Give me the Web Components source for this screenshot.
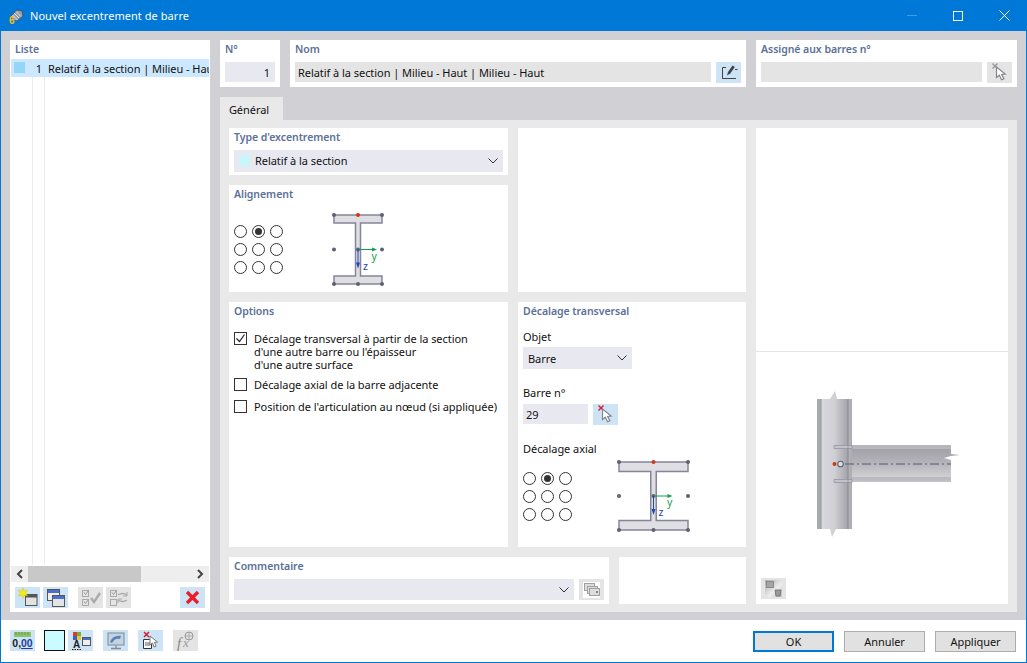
<!DOCTYPE html>
<html lang="fr"><head><meta charset="utf-8"><title>Nouvel excentrement de barre</title>
<style>
html,body{margin:0;padding:0;height:100%;overflow:hidden}
body{font:11px "Noto Sans","Open Sans",sans-serif;color:#111;letter-spacing:-.05px}
</style></head><body>
<x-window title-text="Nouvel excentrement de barre">
  <x-list slot="list"></x-list>
  <x-card slot="no" label="N°"><x-input w="50" align="right" value="1"></x-input></x-card>
  <x-card slot="nom" label="Nom"><x-row gap="5"><x-input grow value="Relatif à la section | Milieu - Haut | Milieu - Haut" tone="gray"></x-input><x-btn icon="edit"></x-btn></x-row></x-card>
  <x-card slot="assign" label="Assigné aux barres n°"><x-row gap="5"><x-input grow tone="gray"></x-input><x-btn icon="cursorx" off></x-btn></x-row></x-card>

  <x-card slot="type" label="Type d'excentrement"><x-select swatch="#c9f6fb" value="Relatif à la section" w="269" nudge></x-select></x-card>
  <x-card slot="align" label="Alignement"><x-align></x-align></x-card>
  <x-card slot="blank1"></x-card>
  <x-card slot="options" label="Options"><x-options></x-options></x-card>
  <x-card slot="offset" label="Décalage transversal"><x-offset></x-offset></x-card>
  <x-card slot="comment" label="Commentaire"><x-row gap="5"><x-select w="340" h="21"></x-select><x-btn icon="stack" off></x-btn></x-row></x-card>
  <x-card slot="blank2"></x-card>
  <x-preview slot="preview"></x-preview>

  <x-footer slot="footer"></x-footer>
</x-window>
<script>
const ICONS={
 edit:`<path d="M10 5.500H6.500v11H10M6.500 16.500H20" fill="none" stroke="#444" stroke-width="1"/><path d="M11 13.500l1-3.500 4.500-6.500 2.300 1.500-4.500 6.500z" fill="#444"/><path d="M19 7.500h2.500" stroke="#444"/>`,
 cursorx:`<path d="M5.500 1.500l5 5M10.500 1.500l-5 5" stroke="C1" stroke-width="1.400"/><path d="M9.500 5l0 10.500 2.800-2.300 2.300 4.600 2.300-1-2.300-4.400 3.600-.4z" fill="#fff" stroke="#85858d" stroke-width="1.200"/>`,
 neww:`<rect x="10.500" y="7.500" width="11.500" height="11" fill="#e2e2e2" stroke="#555"/><rect x="10.500" y="7.500" width="11.500" height="3" fill="#555"/><path d="M8 1l1.300 3.200 3.400-.8-2 2.800 2 2.800-3.400-.8L8 11.400 6.700 8.200l-3.400.8 2-2.800-2-2.800 3.400.8z" fill="#f7ec15" stroke="#c9b900" stroke-width=".4"/>`,
 copy:`<rect x="4.500" y="2.500" width="12" height="11" fill="#eee" stroke="#555"/><rect x="5" y="3" width="11" height="3" fill="#4a6fd0"/><rect x="9.500" y="8.500" width="12" height="11" fill="#e4e4e4" stroke="#555"/><rect x="10" y="9" width="11" height="3" fill="#4a6fd0"/>`,
 checks:`<g fill="none" stroke="#aaa"><rect x="4.500" y="3.500" width="6" height="6"/><rect x="4.500" y="12.500" width="6" height="6"/></g><path d="M6 5.500l1.500 2 3-4M6 14.500l1.500 2 3-4" fill="none" stroke="#999"/><path d="M13 11l3 4 6-9" fill="none" stroke="#aaa" stroke-width="2.400"/>`,
 swap:`<g fill="none" stroke="#aaa"><rect x="4.500" y="3.500" width="6" height="6"/><rect x="4.500" y="12.500" width="6" height="6"/></g><path d="M6 5.500l1.500 2 3-4" fill="none" stroke="#999"/><path d="M12 8c3-2 6-2 9 0M21 13c-3 2-6 2-9 0" fill="none" stroke="#aaa" stroke-width="1.400"/><path d="M21 5v4h-4M12 16v-4h4" fill="none" stroke="#aaa"/>`,
 del:`<path d="M7 5l11 11M18 5L7 16" stroke="#ee1c25" stroke-width="3.300"/>`,
 units:`<rect x="4" y="2" width="17" height="5" fill="#8fc36a"/><path d="M6 2v3M9 2v3M12 2v3M15 2v3M18 2v3" stroke="#4e8a34" stroke-width=".7"/><text x="12.500" y="17" text-anchor="middle" font-family="Liberation Sans" font-size="10.500" font-weight="700" fill="#222">0,<tspan fill="#223f96" text-decoration="underline">00</tspan></text>`,
 tree:`<rect x="5" y="2" width="4" height="4" fill="#e03a2c"/><rect x="9" y="2" width="4" height="4" fill="#69b33b"/><rect x="5" y="6" width="4" height="4" fill="#3c5fd0"/><rect x="9" y="6" width="4" height="4" fill="#efc82b"/><text x="8.500" y="18" text-anchor="middle" font-family="Liberation Sans" font-size="10" font-weight="700" fill="#222">A</text><path d="M4 19.500h10" stroke="#222" stroke-dasharray="1.500 1"/><rect x="14.500" y="7.500" width="8" height="8" fill="#eee" stroke="#555"/><rect x="15" y="8" width="7" height="2" fill="#4a6ecb"/>`,
 monitor:`<rect x="5" y="3" width="16" height="12" fill="#c4d3e2" stroke="#8a96a2" stroke-width="1.200"/><path d="M7 12c2-5 6-7 11-6l-1 3c-3-1-6 0-8 4z" fill="#5b82b4"/><path d="M13 15.500v2.500M8 18.500h10" stroke="#7e8a96" stroke-width="1.300"/>`,
 docx:`<path d="M6 2l5 5M11 2L6 7" stroke="#e0172b" stroke-width="1.500"/><path d="M5.500 9.500h6l2 2v7h-8z" fill="#fff" stroke="#333"/><path d="M7 13h5M7 15h5" stroke="#333" stroke-width=".8"/><path d="M12 6l0 9 2.500-2 1.500 4 2-.8-1.500-3.800 3-.4z" fill="#fff" stroke="#777"/>`,
 fx:`<text x="4" y="18" font-family="Liberation Serif" font-style="italic" font-size="15" fill="#888">f</text><text x="10" y="17" font-family="Liberation Serif" font-style="italic" font-size="13" fill="#999">x</text><circle cx="16" cy="6" r="4" fill="none" stroke="#999"/><path d="M12 6h8M16 2v8" stroke="#999" stroke-width=".7"/>`,
 stack:`<rect x="4" y="3" width="17" height="16" fill="#fff"/><g fill="#ddd" stroke="#a0a0a0"><rect x="5.500" y="4.500" width="10" height="7"/><rect x="8.500" y="7.500" width="10" height="7"/><rect x="10.500" y="9.500" width="10" height="7"/></g><rect x="17" y="12" width="2" height="2" fill="#888"/>`,
 view:`<defs><linearGradient id="vg" x1="0" y1="0" x2="1" y2="1"><stop offset="0" stop-color="#aaa"/><stop offset=".6" stop-color="#eee"/><stop offset="1" stop-color="#bbb"/></linearGradient></defs><rect x="4" y="2" width="17" height="17" fill="url(#vg)"/><rect x="5.500" y="3.500" width="7" height="6" fill="#a5a5a5" stroke="#8a8a8a"/><path d="M14 12h6l-1 6h-4z" fill="#999" stroke="#777"/>`
};
function def(name,css,render){
  customElements.define(name,class extends HTMLElement{
    connectedCallback(){
      if(this.shadowRoot)return;
      const r=this.attachShadow({mode:'open'});
      r.innerHTML=`<style>${css}</style>`+render(this);
    }
  });
}
const a=(e,n,d='')=>e.hasAttribute(n)?e.getAttribute(n):d;

def('x-row',':host{display:flex;align-items:flex-start}',e=>{e.style.gap=a(e,'gap','0')+'px';return '<slot></slot>'});

def('x-btn',`:host{display:block;flex:none;width:25px;height:21px;background:#cde4f7}
 :host([off]){background:#e4e4e4}svg{display:block}`,
 e=>`<svg width="25" height="21" viewBox="0 0 25 21">${(ICONS[a(e,'icon')]||'').replace(/C1/g,e.hasAttribute('off')?'#999':'#e0172b')}</svg>`);

def('x-input',`:host{display:block;height:20px;flex:none;box-sizing:border-box;padding:1px 5px 0 3px;line-height:20px;background:#e8e8f0;white-space:nowrap;overflow:hidden}
 :host([tone=gray]){background:#e4e4e4}:host([grow]){flex:1;min-width:0}:host([align=right]){text-align:right}`,
 e=>{if(a(e,'w'))e.style.width=a(e,'w')+'px';return a(e,'value')});

def('x-select',`:host{display:flex;align-items:center;flex:none;box-sizing:border-box;height:22px;background:#e8e8f0;padding:0 5px;white-space:nowrap}
 :host([nudge]){padding-bottom:1px}
 i{width:11px;height:11px;margin-right:5px;display:block}
 span{flex:1}svg{display:block;flex:none}`,
 e=>{e.style.width=a(e,'w')+'px';if(a(e,'h'))e.style.height=a(e,'h')+'px';
  return (a(e,'swatch')?`<i style="background:${a(e,'swatch')}"></i>`:'')+`<span>${a(e,'value')}</span><svg width="10" height="6" viewBox="0 0 10 6"><path d="M.5.5L5 5 9.500.5" fill="none" stroke="#333"/></svg>`});

def('x-card',`:host{display:block;background:#fff;padding:0 5px;min-width:0;overflow:hidden;box-sizing:border-box}
 h4{margin:0;height:18px;line-height:18px;font-size:10.500px;font-weight:600;color:#5c7098;white-space:nowrap}
 .c{margin-top:4px}`,
 e=>a(e,'label')?`<h4>${a(e,'label')}</h4><div class="c"><slot></slot></div>`:'');

def('x-radios',`:host{display:grid;grid-template-columns:repeat(3,13px);grid-auto-rows:13px;gap:5px;flex:none}
 i{display:block;box-sizing:border-box;width:13px;height:13px;border:1px solid #333;border-radius:50%;position:relative}
 i.on::after{content:"";position:absolute;inset:2px;border-radius:50%;background:#333}`,
 ()=>[0,1,2,3,4,5,6,7,8].map(i=>`<i class="${i==1?'on':''}"></i>`).join(''));

def('x-ibeam',':host{display:block;flex:none}svg{display:block;overflow:visible}',e=>{
 const w=+a(e,'w'),h=+a(e,'h'),f=+a(e,'f'),t=+a(e,'t'),cx=w/2,cy=h/2,c='#5f5f75';
 const d=(x,y,col=c)=>`<circle cx="${x}" cy="${y}" r="2" fill="${col}"/>`;
 const s=t/2;
 return `<svg width="${w}" height="${h}" viewBox="0 0 ${w} ${h}">
 <path d="M0 0H${w}V${f}H${cx+s}V${h-f}H${w}V${h}H0V${h-f}H${cx-s}V${f}H0Z" fill="#dedee3" stroke="#85859a" stroke-width="1.500"/>
 ${d(0,0)}${d(w,0)}${d(0,h)}${d(cx,h)}${d(w,h)}${d(0,cy)}${d(w,cy)}${d(cx,cy)}${d(cx,0,'#d0390f')}
 <path d="M${cx} ${cy}H${cx+15}" stroke="#12a04e" stroke-width="1"/><path d="M${cx+19} ${cy}l-5-2v4z" fill="#12a04e"/>
 <path d="M${cx} ${cy}V${cy+15}" stroke="#1b45b8" stroke-width="1"/><path d="M${cx} ${cy+19}l-2-6h4z" fill="#1b45b8"/>
 <text x="${cx+13.5}" y="${cy+10}" font-family="Noto Sans" font-size="10.500" fill="#12a04e">y</text>
 <text x="${cx+5}" y="${cy+20}" font-family="Noto Sans" font-size="10.500" fill="#1b45b8">z</text></svg>`});

def('x-align',':host{display:flex;align-items:flex-start;padding-top:18px}x-ibeam{margin:-10px 0 0 51px}',
 ()=>`<x-radios></x-radios><x-ibeam w="48" h="69" f="8" t="5"></x-ibeam>`);

def('x-check',`:host{display:flex;align-items:flex-start;line-height:13px}
 i{flex:none;display:block;box-sizing:border-box;width:13px;height:13px;border:1px solid #333;margin:0 7px 0 0;background:#fff}
 svg{display:block}`,
 e=>`<i>${e.hasAttribute('on')?'<svg width="11" height="11" viewBox="0 0 11 11"><path d="M1.500 5.500l3 3 5-7" fill="none" stroke="#222" stroke-width="1.200"/></svg>':''}</i><span><slot></slot></span>`);

def('x-options',':host{display:flex;flex-direction:column;padding-top:8px}',
 ()=>`<x-check on>Décalage transversal à partir de la section<br>d'une autre barre ou l'épaisseur<br>d'une autre surface</x-check>
 <x-check style="margin-top:7px">Décalage axial de la barre adjacente</x-check>
 <x-check style="margin-top:9px">Position de l'articulation au nœud (si appliquée)</x-check>`);

def('x-offset',`:host{display:block}
 p{margin:0;height:18px;line-height:18px}
 .r{display:flex;gap:5px}
 .g{display:flex;align-items:flex-start;padding-top:14px}
 x-ibeam{margin:-10px 0 0 47px}`,
 ()=>`<p style="margin-top:8px">Objet</p><x-select w="109" value="Barre" style="margin-top:1px"></x-select>
 <p style="margin-top:15px">Barre n°</p><div class="r" style="margin-top:2px"><x-input w="65" value="29"></x-input><x-btn icon="cursorx"></x-btn></div>
 <p style="margin-top:15px">Décalage axial</p><div class="g"><x-radios></x-radios><x-ibeam w="69" h="68" f="9.500" t="5.500"></x-ibeam></div>`);

def('x-preview',`:host{display:flex;flex-direction:column;background:#fff;width:252px;flex:none}
 .t{height:223px;border-bottom:1px solid #e4e4e4}
 .b{flex:1;display:flex;flex-direction:column;padding:38px 5px 5px}
 svg{display:block;margin-left:39px;flex:none}
 x-btn{margin-top:auto}`,
 ()=>`<div class="t"></div><div class="b">
 <svg width="160" height="150" viewBox="0 0 160 150">
 <defs>
  <linearGradient id="col" x1="0" x2="1" y1="0" y2="0"><stop offset="0" stop-color="#a9a9b1"/><stop offset=".12" stop-color="#a9a9b1"/><stop offset=".13" stop-color="#d8d8de"/><stop offset=".5" stop-color="#cfcfd4"/><stop offset=".88" stop-color="#a3a3aa"/><stop offset=".89" stop-color="#b8b8bd"/><stop offset="1" stop-color="#a9a9ae"/></linearGradient>
  <linearGradient id="bm" x1="0" x2="0" y1="0" y2="1"><stop offset="0" stop-color="#b6b6bd"/><stop offset=".1" stop-color="#b6b6bd"/><stop offset=".11" stop-color="#a2a2a8"/><stop offset=".5" stop-color="#b4b4ba"/><stop offset=".87" stop-color="#d0d0d4"/><stop offset=".88" stop-color="#b5b5bb"/><stop offset="1" stop-color="#c4c4c9"/></linearGradient>
 </defs>
 <path d="M17 9h13l5-8 2 8h15v130H36l-4 8-2-8H17z" fill="url(#col)"/>
 <path d="M21 9v130M48 9v130" stroke="#8f8f97" stroke-width=".8"/>
 <path d="M52 55H151V64l9 1-9 1-7 2 7 2V92H52z" fill="url(#bm)"/>
 <path d="M34 55.500h18v3H34zM34 89.500h18v3H34z" fill="#c3c3c9" stroke="#8f8f97" stroke-width=".7"/>
 <path d="M48 9v130" stroke="#8f8f97" stroke-width=".8"/>
 <path d="M45 74H151" stroke="#77778a" stroke-width="1.300" stroke-dasharray="9 3 2 3"/>
 <circle cx="40.500" cy="74" r="2.800" fill="#ddd" stroke="#5f5f78" stroke-width="1.100"/>
 <circle cx="34.500" cy="74" r="2" fill="#d0390f"/>
 </svg>
 <x-btn icon="view" off></x-btn></div>`);

def('x-list',`:host{display:flex;flex-direction:column;background:#fff;width:200px;flex:none;box-sizing:border-box;padding:0 1px 4px}
 h4{margin:0;height:19px;line-height:18px;padding-left:4px;font-size:10.500px;font-weight:600;color:#5c7098}
 .rows{flex:1;min-height:0;position:relative;overflow:hidden;background:linear-gradient(#ececec,#ececec) 21px 0/1px 100% no-repeat,linear-gradient(#ececec,#ececec) 33px 0/1px 100% no-repeat}
 .row{display:flex;align-items:center;height:18px;background:#cce8ff;white-space:nowrap;overflow:hidden;padding-top:1px;box-sizing:border-box}
 .row i{width:11px;height:11px;background:#93d6f7;margin:0 0 3px 3px;flex:none}
 .row b{font-weight:400;width:17px;text-align:right;flex:none;margin-right:6px}
 .sb{display:flex;align-items:center;justify-content:space-between;height:16px;background:#eee;margin-top:1px;position:relative}
 .sb svg{display:block;flex:none;margin:0 5px}
 .th{position:absolute;left:17px;width:113px;top:0;bottom:0;background:#c8c8c8}
 .bar{display:flex;height:21px;margin-top:5px;padding-left:4px}`,
 ()=>`<h4>Liste</h4><div class="rows"><div class="row"><i></i><b>1</b><span>Relatif à la section | Milieu - Haut | Milieu - Haut</span></div></div>
 <div class="sb"><svg width="7" height="10" viewBox="0 0 7 10"><path d="M6 1L2 5l4 4" fill="none" stroke="#444" stroke-width="2"/></svg><div class="th"></div><svg width="7" height="10" viewBox="0 0 7 10"><path d="M1 1l4 4-4 4" fill="none" stroke="#444" stroke-width="2"/></svg></div>
 <div class="bar"><x-btn icon="neww"></x-btn><x-btn icon="copy" style="margin-left:3px"></x-btn><x-btn icon="checks" off style="margin-left:10px"></x-btn><x-btn icon="swap" off style="margin-left:3px"></x-btn><x-btn icon="del" style="margin-left:49px"></x-btn></div>`);

def('x-footer',`:host{display:flex;align-items:flex-start;height:42px;background:#fff;padding:10px 10px 0 9px;box-sizing:border-box;flex:none}
 .sw{width:21px;height:21px;box-sizing:border-box;border:1px solid #111;background:#c9fbff;margin:0 3px 0 9px}
 .sp{flex:1}
 button{all:unset;box-sizing:border-box;width:81px;height:21px;margin-top:1px;background:#e1e1e1;border:1px solid #adadad;text-align:center;line-height:19px;font:inherit}
 button.def{border:2px solid #0078d7;line-height:17px}
 button+button{margin-left:10px}`,
 ()=>`<x-btn icon="units"></x-btn><div class="sw"></div><x-btn icon="tree"></x-btn><x-btn icon="monitor" style="margin-left:10px"></x-btn><x-btn icon="docx" style="margin-left:10px"></x-btn><x-btn icon="fx" off style="margin-left:10px"></x-btn><div class="sp"></div>
 <button class="def">OK</button><button>Annuler</button><button>Appliquer</button>`);

def('x-window',`:host{display:flex;flex-direction:column;width:1027px;height:663px;box-sizing:border-box;border:1px solid #0078d7;border-top:0;background:#d0d0d5;overflow:hidden}
 .tb{height:31px;flex:none;background:#0078d7;color:#fff;display:flex;align-items:center;padding-left:8px;margin:0 -1px;font-size:11px;letter-spacing:.05px}
 .tb .ic{margin-right:6px;display:block}
 .tb .tt{flex:1}
 .tb .w{width:46px;display:flex;justify-content:center;align-items:center;height:31px}
 .main{flex:1;min-height:0;display:flex;gap:10px;padding:9px 9px 8px}
 .right{flex:1;min-width:0;display:flex;flex-direction:column}
 .top{display:grid;grid-template-columns:60px 456px 1fr;grid-template-rows:47px;gap:10px}
 .tab{align-self:flex-start;margin-top:10px;width:63px;height:23px;background:#e9e9e9;line-height:25px;padding-right:5px;box-sizing:border-box;text-align:center}
 .panel{flex:1;min-height:0;background:#e9e9e9;padding:8px 9px;display:flex;gap:10px}
 .left{width:517px;flex:none;display:flex;flex-direction:column;gap:10px}
 .g{display:grid;grid-template-columns:279px 228px;grid-template-rows:47px 107px 245px;gap:10px}
 .b1{grid-column:2;grid-row:1/span 2}
 .bot{display:grid;grid-template-columns:380px 127px;grid-template-rows:47px;gap:10px}`,
 e=>`<div class="tb">
 <svg class="ic" width="16" height="16" viewBox="0 0 16 16"><path d="M3 8l6-6 5 1 1 5-6 5-5-1z" fill="#9aa0a8" stroke="#444" stroke-width=".7"/><path d="M6 5l5 5M8 3.500l5 5M4.500 7l5 5" stroke="#e8e8e8" stroke-width=".8"/><text x="1" y="15.500" font-family="Liberation Sans" font-size="10" font-weight="700" fill="#f2c21a">6</text></svg>
 <span class="tt">${a(e,'title-text')}</span>
 <span class="w"><svg width="12" height="2"><path d="M1 .5h10" stroke="#3f9de2"/></svg></span>
 <span class="w"><svg width="10" height="10"><rect x=".5" y=".5" width="9" height="9" fill="none" stroke="#fff"/></svg></span>
 <span class="w"><svg width="11" height="11"><path d="M.5.5l10 10M10.500.5l-10 10" stroke="#fff"/></svg></span>
 </div>
 <div class="main"><slot name="list"></slot><div class="right">
  <div class="top"><slot name="no"></slot><slot name="nom"></slot><slot name="assign"></slot></div>
  <div class="tab">Général</div>
  <div class="panel"><div class="left"><div class="g">
    <slot name="type"></slot><div class="b1" style="display:grid"><slot name="blank1"></slot></div>
    <slot name="align" style="grid-column:1;grid-row:2"></slot>
    <slot name="options" style="grid-column:1;grid-row:3"></slot><slot name="offset" style="grid-column:2;grid-row:3"></slot>
  </div><div class="bot"><slot name="comment"></slot><slot name="blank2"></slot></div></div>
  <slot name="preview"></slot></div>
 </div></div><slot name="footer"></slot>`);
</script>
</body></html>
